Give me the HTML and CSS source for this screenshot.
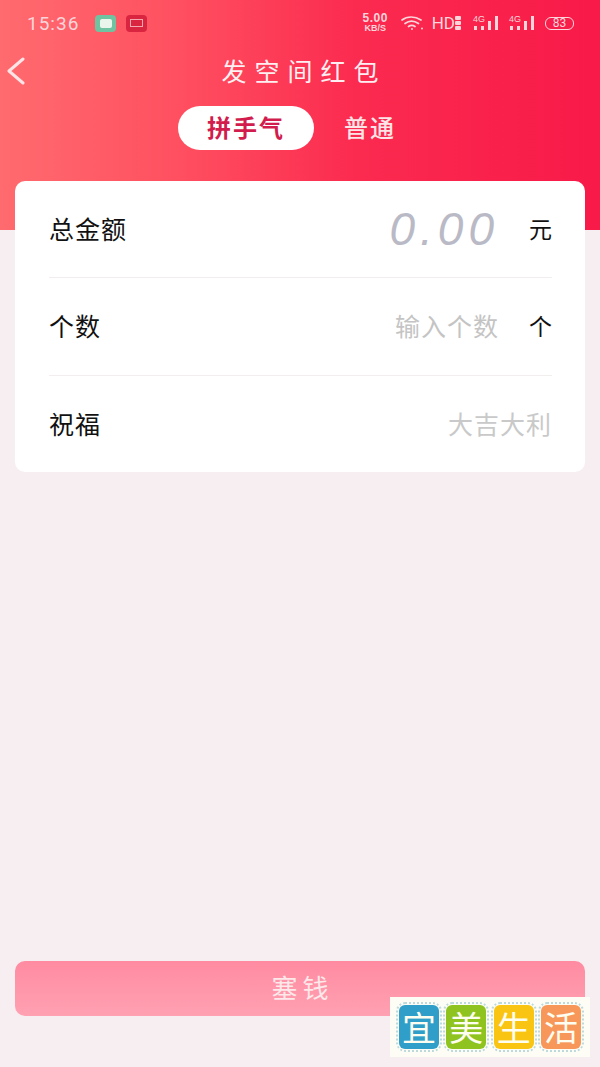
FILE: index.html
```html
<!DOCTYPE html>
<html lang="zh-CN">
<head>
  <meta charset="UTF-8">
  <meta name="viewport" content="width=device-width, initial-scale=1.0">
  <title>发空间红包</title>
  <link rel="stylesheet" href="styles.css">
</head>
<body>
  <div class="page">

    <!-- Red header -->
    <div class="header">
      <div class="statusbar">
        <div class="status-left">
          <span class="time">15:36</span>
          <span class="app-icon green"><span></span></span>
          <span class="app-icon red"><span></span></span>
        </div>
        <div class="status-right">
          <span class="speed"><b>5.00</b><i>KB/S</i></span>
          <svg class="wifi" width="24" height="16" viewBox="0 0 24 16" fill="none" stroke="#fbd5da" stroke-width="1.7" stroke-linecap="round">
            <path d="M2 5 C7 1 15 1 21 5"/>
            <path d="M5 8.5 C9 5.5 14 5.5 18.500 8.500"/>
            <path d="M8.500 11.500 C10.500 10 13 10 15 11.500"/>
            <circle cx="12" cy="14" r="1" fill="#fbd5da" stroke="none"/>
            <circle cx="22" cy="13.500" r="1" fill="#fbd5da" stroke="none"/>
          </svg>
          <span class="hd">HD</span>
          <svg class="hd-bars" width="7" height="14" viewBox="0 0 7 14" fill="#fbd5da">
            <rect x="0" y="0" width="6" height="4" rx="1"/>
            <rect x="0" y="5" width="6" height="4" rx="1"/>
            <rect x="0" y="10" width="6" height="4" rx="1"/>
          </svg>
          <span class="signal"><em>4G</em><svg width="26" height="15" viewBox="0 0 26 15" fill="#fbd5da"><rect x="1" y="10" width="3" height="4"/><rect x="8" y="10" width="3" height="4"/><rect x="15" y="5" width="3" height="9"/><rect x="22" y="0" width="3" height="14"/></svg></span>
          <span class="signal"><em>4G</em><svg width="26" height="15" viewBox="0 0 26 15" fill="#fbd5da"><rect x="1" y="10" width="3" height="4"/><rect x="8" y="10" width="3" height="4"/><rect x="15" y="5" width="3" height="9"/><rect x="22" y="0" width="3" height="14"/></svg></span>
          <span class="battery">83</span>
        </div>
      </div>

      <div class="titlebar">
        <svg class="back" width="20" height="28" viewBox="0 0 20 28" fill="none" stroke="#fde4e6" stroke-width="3" stroke-linecap="round" stroke-linejoin="round">
          <path d="M17 2 L3 14 L17 26"/>
        </svg>
        <span class="title">发空间红包</span>
      </div>

      <div class="tabs">
        <span class="tab active">拼手气</span>
        <span class="tab">普通</span>
      </div>
    </div>

    <!-- Form card -->
    <div class="card">
      <div class="row">
        <span class="label">总金额</span>
        <span class="amount">0.00</span>
        <span class="unit">元</span>
      </div>
      <div class="row">
        <span class="label">个数</span>
        <span class="hint">输入个数</span>
        <span class="unit">个</span>
      </div>
      <div class="row">
        <span class="label">祝福</span>
        <span class="hint last">大吉大利</span>
      </div>
    </div>

    <button class="submit">塞钱</button>

    <!-- Watermark -->
    <div class="watermark">
      <span class="stamp blue">宜</span>
      <span class="stamp lime">美</span>
      <span class="stamp yellow">生</span>
      <span class="stamp orange">活</span>
    </div>
  </div>
</body>
</html>
```

FILE: styles.css
```css
/* General styles */
body {
  margin: 0;
  background-color: #f6eef0;
  font-family: 'Noto Sans CJK SC', 'Noto Sans', sans-serif;
}

.page {
  position: relative;
  display: flex;
  flex-direction: column;
  height: 1067px;
  overflow: hidden;
}

/* Header */
.header {
  height: 230px;
  flex-shrink: 0;
  background: linear-gradient(90deg, #ff6b6f 0%, #ff4f60 30%, #fb2a4f 60%, #f81a49 100%);
}

.statusbar {
  display: flex;
  justify-content: space-between;
  align-items: center;
  height: 46px;
  padding: 0 26px 0 27px;
  color: #fbd5da;
}

.status-left {
  display: flex;
  align-items: center;
  gap: 15px;
}

.time {
  font-family: 'Roboto', sans-serif;
  font-size: 19px;
  letter-spacing: 1px;
  width: 53px;
}

.app-icon {
  display: flex;
  align-items: center;
  justify-content: center;
  width: 21px;
  height: 17px;
  border-radius: 4px;
}

.app-icon.green {
  background-color: #6fc3a0;
}

.app-icon.green span {
  width: 12px;
  height: 9px;
  border-radius: 2px;
  background-color: #e9f5ea;
}

.app-icon.red {
  background-color: #d9253f;
  margin-left: -5px;
}

.app-icon.red span {
  width: 11px;
  height: 6px;
  border: 1px solid #f3a7ae;
}

.status-right {
  display: flex;
  align-items: center;
}

.speed {
  display: flex;
  flex-direction: column;
  align-items: center;
  width: 29px;
  font-family: 'Liberation Sans', sans-serif;
  line-height: 10px;
  margin-right: 10px;
}

.speed b {
  font-size: 12px;
  letter-spacing: 0.5px;
}

.speed i {
  font-size: 9px;
  font-style: normal;
  font-weight: bold;
}

.wifi {
  margin-right: 8px;
}

.hd {
  font-family: 'Roboto', sans-serif;
  font-size: 17px;
}

.hd-bars {
  margin-left: 0;
  margin-right: 11px;
}

.signal {
  position: relative;
  display: flex;
  margin-right: 10px;
}

.signal em {
  position: absolute;
  left: 0;
  top: -2px;
  font-family: 'Liberation Sans', sans-serif;
  font-size: 9px;
  font-style: normal;
}

.battery {
  width: 27px;
  height: 11px;
  line-height: 11px;
  border: 1.5px solid #fbd5da;
  border-radius: 6px;
  text-align: center;
  font-family: 'Roboto', sans-serif;
  font-size: 12px;
}

.titlebar {
  position: relative;
  display: flex;
  justify-content: center;
  align-items: center;
  height: 50px;
}

.back {
  position: absolute;
  left: 6px;
  top: 11px;
}

.title {
  color: #fff;
  font-size: 25px;
  line-height: 48px;
  letter-spacing: 8px;
  margin-left: 8px;
  margin-bottom: 2px;
  opacity: 0.92;
}

.tabs {
  display: flex;
  align-items: center;
  gap: 30px;
  height: 44px;
  margin-top: 10px;
  padding-left: 178px;
}

.tab {
  color: #fde4e6;
  font-size: 24px;
  font-weight: 500;
  letter-spacing: 2px;
  padding-bottom: 4px;
}

.tab.active {
  display: flex;
  align-items: center;
  justify-content: center;
  box-sizing: border-box;
  width: 136px;
  height: 44px;
  border-radius: 22px;
  background-color: #fff;
  color: #d11c4d;
  font-weight: 700;
}

/* Form card */
.card {
  display: flex;
  flex-direction: column;
  margin: -49px 15px 0;
  padding: 0 33px 0 34px;
  background-color: #fff;
  border-radius: 10px;
}

.row {
  display: flex;
  align-items: center;
  height: 97px;
  border-bottom: 1px solid #f2eeee;
  box-sizing: border-box;
}

.row:nth-child(2) {
  height: 98px;
}

.row:last-child {
  height: 96px;
  border-bottom: none;
}

.label {
  flex: 1;
  color: #111;
  font-size: 25px;
  letter-spacing: 1px;
  margin-top: -3px;
}

.amount {
  color: #b9bac6;
  font-family: 'Liberation Sans', sans-serif;
  font-size: 46px;
  font-style: italic;
  letter-spacing: 5px;
}

.hint {
  color: #c4c4c4;
  font-size: 25px;
  letter-spacing: 1px;
  margin-top: -3px;
}

.hint.last {
  color: #c9c9c9;
  margin-top: -2px;
}

.unit {
  width: 23px;
  margin-left: 30px;
  color: #111;
  font-size: 23px;
  margin-top: -3px;
}

.submit {
  display: block;
  flex-shrink: 0;
  height: 55px;
  margin: auto 15px 51px;
  padding: 0 0 5px 5px;
  border: none;
  border-radius: 10px;
  background: linear-gradient(180deg, #ff8ba1 0%, #ffa1b2 100%);
  color: #fde8ea;
  font-family: inherit;
  font-size: 26px;
  letter-spacing: 5px;
}

/* Watermark */
.watermark {
  position: absolute;
  left: 390px;
  top: 997px;
  display: flex;
  justify-content: space-between;
  box-sizing: border-box;
  width: 200px;
  height: 60px;
  padding: 7px 9px 8px;
  background-color: #fdfdf6;
}

.stamp {
  display: flex;
  align-items: center;
  justify-content: center;
  width: 40px;
  height: 44px;
  margin-top: 1px;
  border-radius: 6px;
  outline: 2px dotted #bcd9dc;
  outline-offset: 1px;
  color: #fdfdf0;
  font-size: 34px;
  line-height: 1;
}

.stamp.blue {
  background-color: #2f9ec9;
}

.stamp.lime {
  background-color: #8fc31f;
}

.stamp.yellow {
  background-color: #f9c512;
}

.stamp.orange {
  background-color: #f8975a;
}
```
